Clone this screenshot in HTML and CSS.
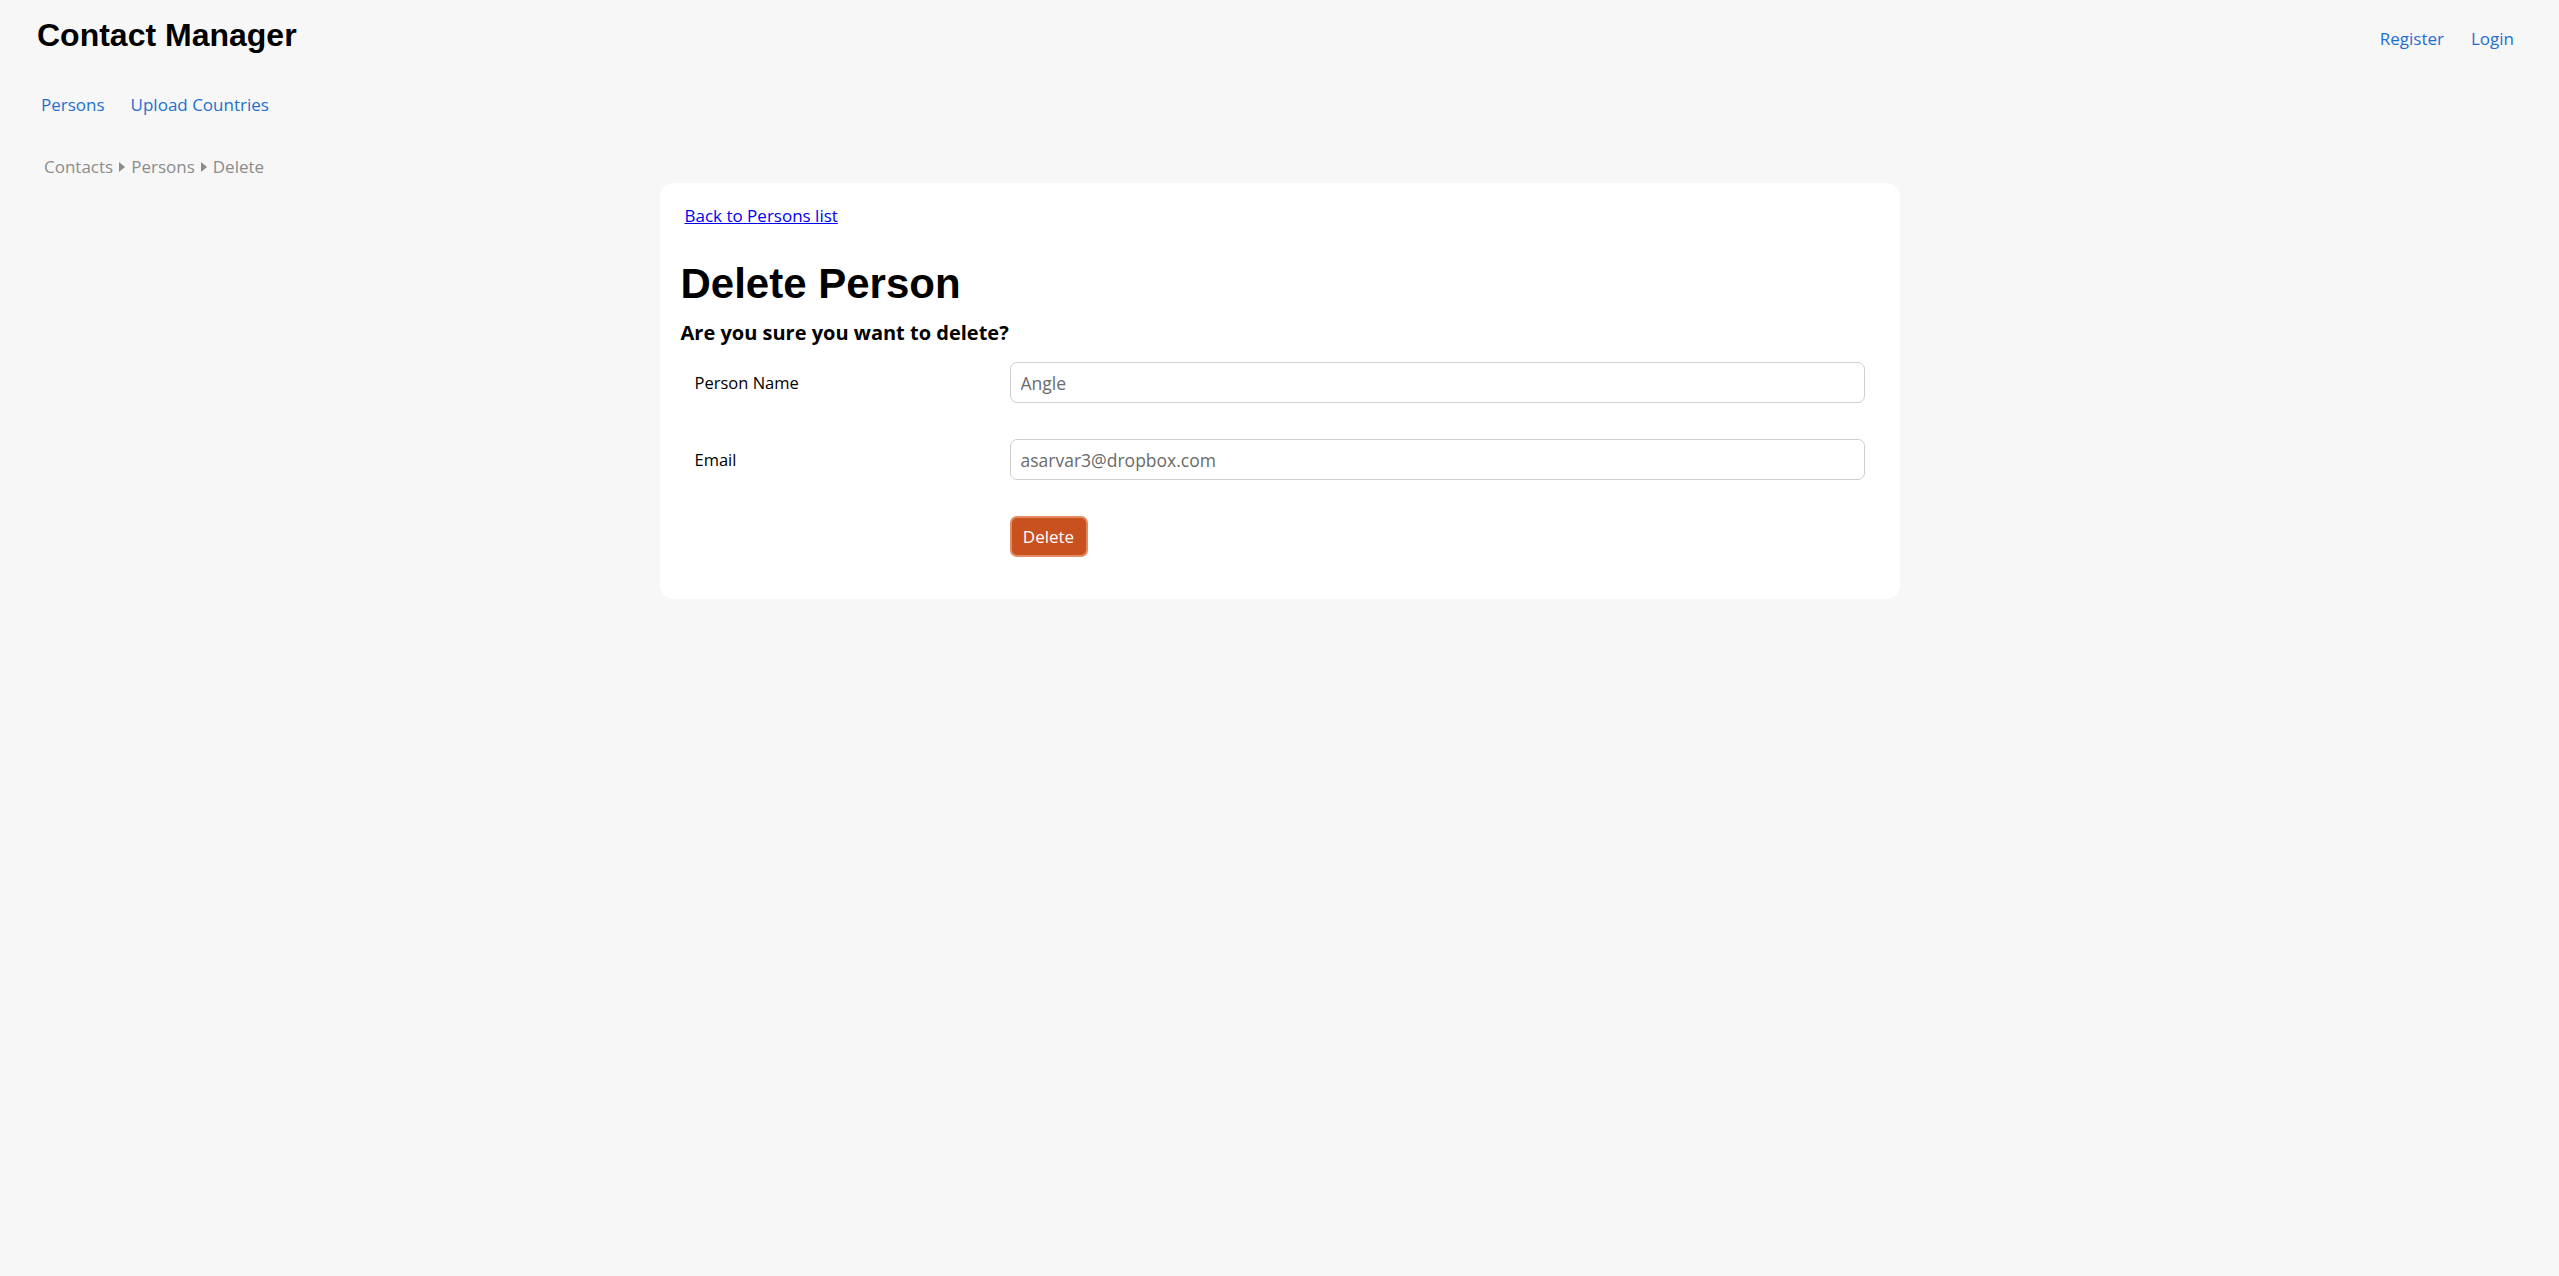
FILE: index.html
```html
<!DOCTYPE html>
<html lang="en">
<head>
<meta charset="utf-8">
<title>Delete Person - Contact Manager</title>
<link rel="stylesheet" href="styles.css">
</head>
<body>
<header class="topbar">
  <div class="brand">Contact Manager</div>
  <nav class="account">
    <a href="#">Register</a>
    <a href="#">Login</a>
  </nav>
</header>
<nav class="mainnav">
  <a href="#">Persons</a>
  <a href="#">Upload Countries</a>
</nav>
<div class="breadcrumb">
  <span>Contacts</span><span class="sep"></span><span>Persons</span><span class="sep"></span><span>Delete</span>
</div>
<main class="card">
  <a class="back" href="#">Back to Persons list</a>
  <h1 class="title">Delete Person</h1>
  <h3 class="question">Are you sure you want to delete?</h3>
  <form class="form">
    <div class="row">
      <label class="label">Person Name</label>
      <input class="field" type="text" value="Angle" disabled>
    </div>
    <div class="row">
      <label class="label">Email</label>
      <input class="field" type="text" value="asarvar3@dropbox.com" disabled>
    </div>
    <div class="row">
      <span class="label"></span>
      <button class="btn-delete" type="button">Delete</button>
    </div>
  </form>
</main>
</body>
</html>
```

FILE: styles.css
```css
html, body {
  margin: 0;
  padding: 0;
}
body {
  background: #f7f7f7;
  font-family: "Open Sans", "Noto Sans", sans-serif;
  color: #000;
  min-height: 1276px;
}
a {
  text-decoration: none;
}
.topbar {
  display: flex;
  justify-content: space-between;
  align-items: flex-start;
  padding: 18px 45px 0 37px;
}
.brand {
  font-family: "Liberation Sans", Arial, sans-serif;
  font-weight: bold;
  font-size: 32px;
  line-height: 35px;
}
.account {
  display: flex;
  gap: 27px;
  padding-top: 9px;
}
.account a, .mainnav a {
  color: #1f6fcf;
  font-size: 17px;
  line-height: 23px;
}
.mainnav {
  display: flex;
  gap: 26px;
  padding: 40px 0 0 41px;
}
.breadcrumb {
  display: flex;
  align-items: center;
  gap: 6px;
  padding: 39px 0 0 44px;
  color: #8c8c8c;
  font-size: 17px;
  line-height: 23px;
}
.sep {
  width: 0;
  height: 0;
  border-top: 5px solid transparent;
  border-bottom: 5px solid transparent;
  border-left: 6px solid #8c8c8c;
}
.card {
  width: 1240px;
  box-sizing: border-box;
  margin: 5px auto 0;
  background: #fff;
  border-radius: 14px;
  padding: 21px 35px 42px 21px;
}
.back {
  display: inline-block;
  margin-left: 4px;
  color: #0000ee;
  text-decoration: underline;
  font-size: 17px;
  line-height: 23px;
}
.title {
  font-family: "Liberation Sans", Arial, sans-serif;
  font-weight: bold;
  font-size: 42px;
  line-height: 48px;
  margin: 33px 0 0 0;
}
.question {
  font-size: 20px;
  font-weight: bold;
  line-height: 26px;
  margin: 12px 0 16px 0;
}
.form {
  display: flex;
  flex-direction: column;
  gap: 36px;
}
.row {
  display: flex;
  align-items: center;
}
.label {
  width: 329px;
  padding-left: 14px;
  box-sizing: border-box;
  font-size: 16.5px;
  flex: none;
}
.field {
  flex: 1;
  height: 41px;
  box-sizing: border-box;
  border: 1px solid #cfcfcf;
  border-radius: 7px;
  background: #fff;
  padding: 0 10px;
  font-family: "Open Sans", "Noto Sans", sans-serif;
  font-size: 17.5px;
  color: #6a6a6a;
}
.btn-delete {
  width: 78px;
  height: 41px;
  box-sizing: border-box;
  background: #c9511f;
  border: 2px solid #e38b63;
  border-radius: 7px;
  color: #fff;
  font-family: "Open Sans", "Noto Sans", sans-serif;
  font-size: 17px;
  padding: 0;
}
```
